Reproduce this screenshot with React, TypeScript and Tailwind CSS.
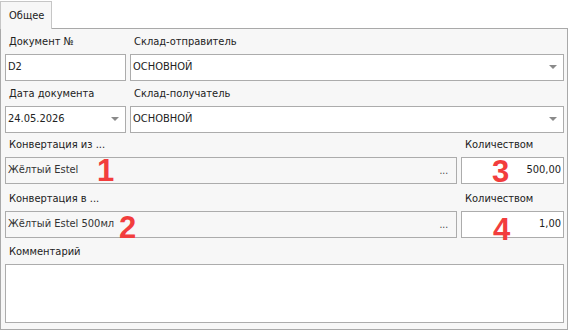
import React from 'react';

const font = { fontFamily: '"DejaVu Sans Condensed", "Liberation Sans", sans-serif' };

const Arrow = () => (
  <svg width="8" height="5" viewBox="0 0 8 5" className="shrink-0">
    <path d="M0 0h8L4 4z" fill="#8a8a8a" />
  </svg>
);

const Label: React.FC<{ text: string; className?: string }> = ({ text, className = '' }) => (
  <div className={`h-[24px] leading-[24px] pl-[4px] text-[11px] text-[#222] ${className}`}>{text}</div>
);

const Badge: React.FC<{ n: string; className: string }> = ({ n, className }) => (
  <span
    className={`absolute text-[31px] font-bold leading-none text-[#f23d3d] ${className}`}
    style={{ fontFamily: '"Liberation Sans", sans-serif' }}
  >
    {n}
  </span>
);

export default function App() {
  return (
    <div className="w-[570px] h-[331px] bg-white relative" style={font}>
      <div className="ml-0 mt-[1px] w-[52px] h-[28px] border border-b-0 border-[#c6c6c6] bg-[#f7f7f7] text-[11px] text-[#222] pl-[8px] pt-[6px] relative z-10">
        Общее
      </div>
      <div className="w-[568px] h-[302px] -mt-[1px] border border-[#a9a9a9] bg-[#f7f7f7] pl-[4px] pr-[3px]">
        <div className="flex gap-[4px] mt-[1px]">
          <div className="w-[121px]">
            <Label text="Документ №" />
            <div className="h-[27px] bg-white border border-[#acacac] flex items-center pl-[2px] text-[11px] text-[#222]">D2</div>
          </div>
          <div className="flex-1">
            <Label text="Склад-отправитель" />
            <div className="h-[27px] bg-white border border-[#acacac] flex items-center pl-[2px] pr-[6px] text-[11px] text-[#222]">
              <span className="flex-1">ОСНОВНОЙ</span>
              <Arrow />
            </div>
          </div>
        </div>

        <div className="flex gap-[4px] mt-[1px]">
          <div className="w-[121px]">
            <Label text="Дата документа" />
            <div className="h-[27px] bg-white border border-[#acacac] flex items-center pl-[2px] pr-[6px] text-[11px] text-[#222]">
              <span className="flex-1">24.05.2026</span>
              <Arrow />
            </div>
          </div>
          <div className="flex-1">
            <Label text="Склад-получатель" />
            <div className="h-[27px] bg-white border border-[#acacac] flex items-center pl-[2px] pr-[6px] text-[11px] text-[#222]">
              <span className="flex-1">ОСНОВНОЙ</span>
              <Arrow />
            </div>
          </div>
        </div>

        <div className="flex gap-[4px]">
          <div className="w-[452px]">
            <Label text="Конвертация из ..." />
            <div className="relative h-[27px] bg-[#f7f7f7] border border-[#acacac] flex items-center pl-[2px] pr-[8px] text-[11px] text-[#333]">
              <span className="flex-1">Жёлтый Estel</span>
              <span className="text-[10px] text-[#444]">...</span>
              <Badge n="1" className="left-[91px] -top-[3px]" />
            </div>
          </div>
          <div className="flex-1">
            <Label text="Количеством" className="pl-[2px]" />
            <div className="relative h-[27px] bg-white border border-[#acacac] flex items-center justify-end pr-[2px] text-[11px] text-[#222]">
              500,00
              <Badge n="3" className="left-[30px] -top-[2px]" />
            </div>
          </div>
        </div>

        <div className="flex gap-[4px] mt-[3px]">
          <div className="w-[452px]">
            <Label text="Конвертация в ..." />
            <div className="relative h-[27px] bg-[#f7f7f7] border border-[#acacac] flex items-center pl-[2px] pr-[8px] text-[11px] text-[#333]">
              <span className="flex-1">Жёлтый Estel 500мл</span>
              <span className="text-[10px] text-[#444]">...</span>
              <Badge n="2" className="left-[113px] top-[0px]" />
            </div>
          </div>
          <div className="flex-1">
            <Label text="Количеством" className="pl-[2px]" />
            <div className="relative h-[27px] bg-white border border-[#acacac] flex items-center justify-end pr-[2px] text-[11px] text-[#222]">
              1,00
              <Badge n="4" className="left-[31px] top-[2px]" />
            </div>
          </div>
        </div>

        <div className="mt-[2px]">
          <Label text="Комментарий" />
          <div className="h-[59px] bg-white border border-[#acacac]" />
        </div>
      </div>
    </div>
  );
}
